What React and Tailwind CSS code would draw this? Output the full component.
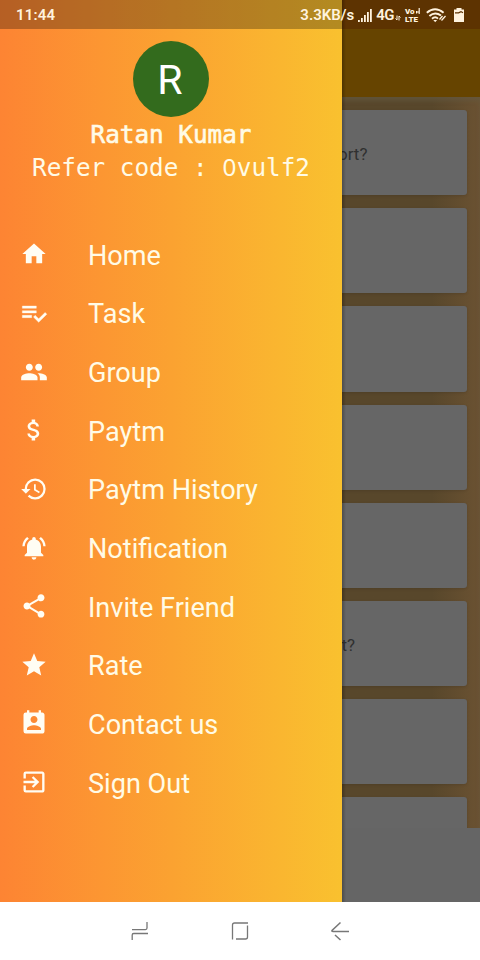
import {
  MdHome,
  MdPeople,
  MdAttachMoney,
  MdHistory,
  MdNotificationsActive,
  MdShare,
  MdGrade,
  MdPermContactCalendar,
  MdExitToApp,
} from "react-icons/md";

function TaskIcon({ size, className }) {
  return (
    <svg className={className} width={size} height={size} viewBox="0 0 24 24" fill="currentColor" stroke="currentColor" strokeWidth="0.3">
      <path d="M14 10H2v2h12v-2zm0-4H2v2h12V6zM2 16h8v-2H2v2zm19.5-4.5L23 13l-6.99 7-4.51-4.5L13 14l3.01 3 5.49-5.5z" />
    </svg>
  );
}

const items = [
  ["Home", MdHome],
  ["Task", TaskIcon],
  ["Group", MdPeople],
  ["Paytm", MdAttachMoney],
  ["Paytm History", MdHistory],
  ["Notification", MdNotificationsActive],
  ["Invite Friend", MdShare],
  ["Rate", MdGrade],
  ["Contact us", MdPermContactCalendar],
  ["Sign Out", MdExitToApp],
];

const cards = ["ort?", "", "", "", "", "t?", "", ""];

function StatusBar() {
  return (
    <div className="absolute inset-x-0 top-0 flex h-[29px] items-center bg-black/28 pt-[1px] pr-[16px] pl-4 text-[#fff3df]">
      <span className="text-[15px] font-semibold tracking-[0.2px]">11:44</span>
      <span className="ml-auto text-[15px] font-semibold">3.3KB/s</span>
      <svg className="ml-[4px]" width="14" height="13" viewBox="0 0 14 13" fill="currentColor">
        <rect x="0" y="11" width="1.8" height="2" />
        <rect x="3" y="9" width="1.8" height="4" />
        <rect x="6" y="6" width="1.8" height="7" />
        <rect x="9" y="3" width="1.8" height="10" />
        <rect x="12" y="0" width="1.8" height="13" />
      </svg>
      <span className="ml-[4px] text-[15px] font-semibold tracking-[-0.5px]">4G</span>
      <svg className="mt-[6px] ml-[1px]" width="6" height="6" viewBox="0 0 6 5" fill="none" stroke="currentColor" strokeWidth="1">
        <path d="M2 0v4.5L.5 3M4 5V.5L5.5 2" />
      </svg>
      <span className="ml-[4px] flex w-[16px] flex-col text-[8px] font-black">
        <span className="flex h-[7px] items-center gap-px leading-[7px]">
          Vo
          <svg width="4" height="6" viewBox="0 0 4 6" fill="none" stroke="currentColor" strokeWidth="1.2">
            <path d="M.6 3v2.5M3.2 0v6M.5 4h2.5" />
          </svg>
        </span>
        <span className="h-[8px] leading-[9px]">LTE</span>
      </span>
      <svg className="ml-[5px]" width="21" height="15" viewBox="0 0 21 15" fill="none" stroke="currentColor" strokeWidth="1.9">
        <path d="M.8 4.8Q9 -2.2 17.6 4.8M3.4 8Q9 3 15 7.6M6 10.8Q9.2 8 12 10.6" />
        <path d="M7.3 12l1.9 2.3 1.9-2.3z" fill="currentColor" stroke="none" />
        <path d="M13.5 11.5l3-3.5M15.5 12.5l4-4.5" strokeWidth="1.3" />
      </svg>
      <svg className="ml-[7px]" width="10" height="14" viewBox="0 0 10 14" fill="currentColor">
        <path d="M2.5 0h5v1.5H10V14H0V1.5h2.5z" />
        <path d="M1 4.8h3.6L7 3.6l2 1.2" fill="none" stroke="#5d3203" strokeWidth="1.2" />
      </svg>
    </div>
  );
}

function Drawer() {
  return (
    <aside className="absolute top-0 left-0 flex h-[902px] w-[342px] flex-col bg-linear-to-r from-[#fd8433] via-[#fba231] to-[#f9c12f] pt-[41px] text-[#fffbe6]">
      <div className="flex flex-col items-center">
        <div className="flex size-[76px] items-center justify-center rounded-full bg-[#336b1d] pt-[2px] pr-[2px] text-[41px] leading-none text-white">R</div>
        <div className="mt-[1px] font-['DejaVu_Sans_Mono',monospace] text-[24.3px] leading-[33px] whitespace-pre [-webkit-text-stroke:0.6px_#fffbe6]">Ratan Kumar</div>
        <div className="font-['DejaVu_Sans_Mono',monospace] text-[24.3px] leading-[33px] whitespace-pre">
          Refer code : <span className="inline-block w-[14.6px] text-center font-['Noto_Sans',sans-serif] leading-none">0</span>vulf2
        </div>
      </div>
      <nav className="mt-[42px] flex flex-col">
        {items.map(([label, Icon]) => (
          <div key={label} className="flex h-[58.65px] items-center pl-5">
            <Icon size={28} className="mb-[2px] shrink-0 text-[#fffdf4]" />
            <span className="ml-10 pt-[2px] text-[27.1px] leading-none whitespace-nowrap">{label}</span>
          </div>
        ))}
      </nav>
    </aside>
  );
}

export default function App() {
  return (
    <div className="relative flex h-[960px] w-[480px] flex-col overflow-hidden bg-white font-[Roboto,sans-serif]">
      <div className="h-[29px] shrink-0 bg-[#824702]" />
      <header className="h-[68px] shrink-0 bg-[#664400]" />
      <main className="flex h-[731px] shrink-0 flex-col gap-[13px] overflow-hidden bg-linear-to-r from-[#58472b] from-90% to-[#6b5232] pt-[13px] pr-[13px] pl-[13px] shadow-[inset_0_4px_4px_rgba(100,90,65,0.6)]">
        {cards.map((text, i) => (
          <div key={i} className="flex h-[85.2px] shrink-0 items-center rounded-[3px] bg-[#666666] pl-[325px] shadow-[0_1px_3px_rgba(0,0,0,0.12)]">
            <span className={i === 0 ? "w-[27px] pt-[4px] text-right text-[17px] text-[#303030]" : "w-[17px] pt-[4px] text-right text-[17px] text-[#303030]"}>{text}</span>
          </div>
        ))}
      </main>
      <div className="h-[74px] shrink-0 bg-[#656565]" />
      <footer className="flex flex-1 items-center justify-center gap-[82px] bg-white text-[#777777]">
        <svg width="18" height="20" viewBox="0 0 18 20" fill="none" stroke="currentColor" strokeWidth="1.3">
          <path d="M1 8.6h13.5q1.5 0 1.5-1.5V1M1.2 19v-5q0-1.5 1.5-1.5H17" />
        </svg>
        <svg width="18" height="20" viewBox="0 0 18 20" fill="none" stroke="currentColor" strokeWidth="1.3">
          <path d="M1.5 18.5V4q0-2 2-2H17M16.5 4.5V16q0 2-2 2H5" />
        </svg>
        <svg width="18" height="20" viewBox="0 0 18 20" fill="none" stroke="currentColor" strokeWidth="1.5">
          <path d="M9.5 1.5L1 9.5Q.6 10.5 2 10.5H18M4 14l5.5 5" />
        </svg>
      </footer>
      <div className="absolute top-0 left-[342px] h-[902px] w-[4px] bg-linear-to-r from-black/25 to-transparent" />
      <Drawer />
      <StatusBar />
    </div>
  );
}
